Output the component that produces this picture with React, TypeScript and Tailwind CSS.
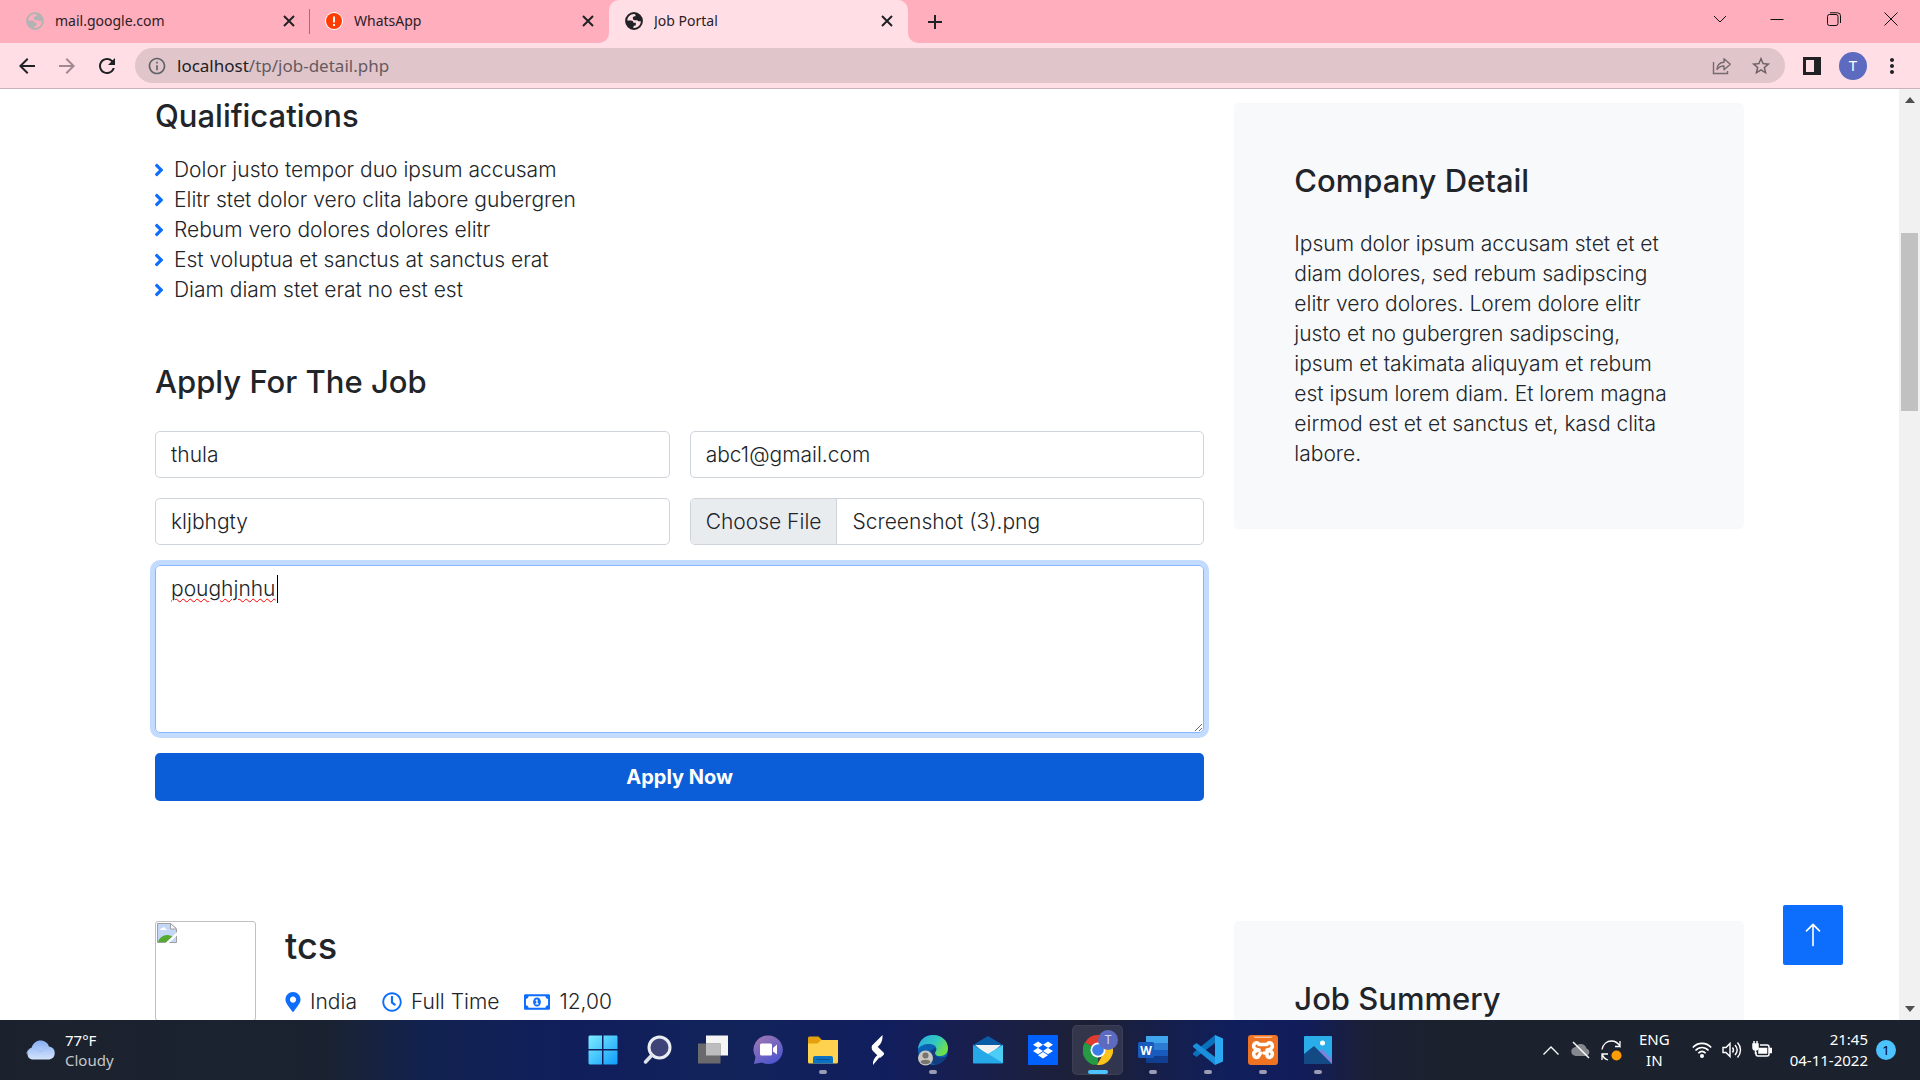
import type { ReactNode } from "react";
import {
  MdAdd,
  MdArrowBack,
  MdArrowForward,
  MdInfoOutline,
  MdMoreVert,
  MdRefresh,
  MdStarBorder,
} from "react-icons/md";
import { FaAngleRight, FaDropbox, FaMapMarkerAlt, FaRegClock, FaRegMoneyBillAlt } from "react-icons/fa";
import { BsArrowUp } from "react-icons/bs";

const qualifications = [
  "Dolor justo tempor duo ipsum accusam",
  "Elitr stet dolor vero clita labore gubergren",
  "Rebum vero dolores dolores elitr",
  "Est voluptua et sanctus at sanctus erat",
  "Diam diam stet erat no est est",
];

function Globe({ className }: { className: string }) {
  return (
    <svg viewBox="0 0 18 18" className={className} aria-hidden="true">
      <circle cx="9" cy="9" r="7.9" fill="none" stroke="currentColor" strokeWidth="2" />
      <path d="M1.5 8.6h4.3c1.7 0 2.6.9 2.6 2.2h2.4v2.6c-1.7 0-2.5.6-2.5 1.8v1.6C4.600 16.500 1.500 13.200 1.500 8.600z" fill="currentColor" />
      <path d="M9 1.200c4.700 0 8 3.400 8 7.900-1 .2-2.200.2-3 .2-.9 0-1.400-.4-1.400-1.100h-2.800c-1.100 0-2-.9-2-2 0-1.200.9-1.900 1.900-1.900h.8V3C10.500 2.300 9.700 1.800 9 1.200z" fill="currentColor" />
    </svg>
  );
}

function Tab({ title, icon, active = false }: { title: string; icon: ReactNode; active?: boolean }) {
  return (
    <div
      className={
        active
          ? "relative flex h-full w-[299px] shrink items-center rounded-t-[10px] bg-[#ffdfe5] pr-[15px] pb-[2px] pl-4"
          : "relative flex h-full w-[299px] shrink items-center pr-[15px] pb-[2px] pl-[15px]"
      }
    >
      {active && (
        <>
          <svg viewBox="0 0 10 10" className="absolute bottom-0 -left-[10px] size-[10px]" aria-hidden="true">
            <path d="M10 0v10H0A10 10 0 0 0 10 0z" fill="#ffdfe5" />
          </svg>
          <svg viewBox="0 0 10 10" className="absolute -right-[10px] bottom-0 size-[10px]" aria-hidden="true">
            <path d="M0 0v10h10A10 10 0 0 1 0 0z" fill="#ffdfe5" />
          </svg>
        </>
      )}
      <span className="flex size-[18px] shrink-0 items-center justify-center">{icon}</span>
      <span className="ml-[11px] flex-1 truncate text-[14px] leading-5 text-[#2a2125]">{title}</span>
      <button aria-label={"Close " + title} className="text-[#202124]">
        <svg viewBox="0 0 12 12" className="size-3" fill="none" stroke="currentColor" strokeWidth="2">
          <path d="M1 1l10 10M11 1L1 11" />
        </svg>
      </button>
    </div>
  );
}

function BrowserHeader() {
  return (
    <header className="shrink-0 font-['Noto_Sans',sans-serif]">
      <div className="flex h-[43px] bg-[#ffaebd] pl-[11px]">
        <Tab title="mail.google.com" icon={<Globe className="size-[18px] text-[#b3b3b3]" />} />
        <div className="my-[9px] -ml-px w-px bg-[#9d7078]" />
        <Tab
          title="WhatsApp"
          icon={
            <svg viewBox="0 0 18 18" className="size-[18px]" aria-hidden="true">
              <circle cx="9" cy="9" r="9" fill="#fff" />
              <circle cx="9" cy="9" r="8" fill="#ff3d00" />
              <path d="M8 4.500h2v6H8zM8 12h2v2H8z" fill="#fff" />
            </svg>
          }
        />
        <Tab active title="Job Portal" icon={<Globe className="size-[18px] text-[#202124]" />} />
        <button aria-label="New tab" className="ml-[15px] text-[#202124]">
          <MdAdd className="size-6" />
        </button>
        <div className="ml-auto flex h-[37px] pr-px text-[#111]">
          <button aria-label="Search tabs" className="flex w-[57px] items-center justify-center">
            <svg viewBox="0 0 14 8" className="h-2 w-[14px]" fill="none" stroke="currentColor">
              <path d="M1 1l6 6 6-6" />
            </svg>
          </button>
          <button aria-label="Minimize" className="flex w-[57px] items-center justify-center">
            <svg viewBox="0 0 14 14" className="size-[14px]" fill="none" stroke="currentColor">
              <path d="M0.500 7.500h13" />
            </svg>
          </button>
          <button aria-label="Restore" className="flex w-[57px] items-center justify-center">
            <svg viewBox="0 0 14 14" className="size-[14px]" fill="none" stroke="currentColor">
              <rect x="0.500" y="2.500" width="10.500" height="11" rx="2" />
              <path d="M3 .8h7.500a3 3 0 0 1 3 3V11" />
            </svg>
          </button>
          <button aria-label="Close window" className="flex w-[57px] items-center justify-center">
            <svg viewBox="0 0 14 14" className="size-[14px]" fill="none" stroke="currentColor">
              <path d="M.5.5l13 13M13.500.5l-13 13" />
            </svg>
          </button>
        </div>
      </div>
      <div className="flex h-[46px] items-center border-b border-[#c9b3b9] bg-[#ffdfe5] pr-4 pl-[15px]">
        <button aria-label="Back" className="mr-4 text-[#202124]">
          <MdArrowBack className="size-6" />
        </button>
        <button aria-label="Forward" className="mr-4 text-[#a2898f]">
          <MdArrowForward className="size-6" />
        </button>
        <button aria-label="Reload" className="mr-4 text-[#202124]">
          <MdRefresh className="size-6" />
        </button>
        <div className="flex h-[35px] flex-1 items-center rounded-full bg-[#e0c5ca] pr-[13px] pl-3">
          <MdInfoOutline className="size-5 text-[#5f6368]" />
          <a href="#address" className="ml-[10px] flex-1 text-[17px] leading-6 text-[#665a5e]">
            <span className="text-[#202124]">localhost</span>/tp/job-detail.php
          </a>
          <button aria-label="Share" className="mr-[18px] text-[#756a6d]">
            <svg viewBox="0 0 20 20" className="size-5" fill="none" stroke="currentColor" strokeWidth="1.400">
              <path d="M1.500 6v11.500h14V15" />
              <path d="M5 13.500c.3-4.500 2.800-7 7-7.200V2.700l6.300 5.500-6.300 5.500V10c-3-.1-5.200 1-7 3.500z" strokeLinejoin="round" />
            </svg>
          </button>
          <button aria-label="Bookmark" className="text-[#6b6164]">
            <MdStarBorder className="size-[22px]" />
          </button>
        </div>
        <button aria-label="Side panel" className="ml-[18px]">
          <svg viewBox="0 0 18 18" className="size-[18px]">
            <path d="M0 0h18v18H0zM3 3v12h8V3z" fill="#202124" fillRule="evenodd" />
          </svg>
        </button>
        <button
          aria-label="Profile T"
          className="ml-[18px] flex size-7 items-center justify-center rounded-full bg-[#5c6bc0] text-[15px] text-white"
        >
          T
        </button>
        <button aria-label="Menu" className="ml-[13px] text-[#202124]">
          <MdMoreVert className="size-6" />
        </button>
      </div>
    </header>
  );
}

const field =
  "h-[47px] w-full min-w-0 rounded-[5px] border border-[#ced4da] bg-white px-[15px] text-[21px] leading-[30px] font-light text-[#212529]";
const heading = "text-[31px] leading-9 font-medium";

function ApplyForm() {
  return (
    <form className="mt-[59px]" onSubmit={(e) => e.preventDefault()}>
      <h4 className={heading}>Apply For The Job</h4>
      <div className="mt-[31px] grid grid-cols-2 gap-5">
        <input aria-label="Your name" className={field} defaultValue="thula" />
        <input aria-label="Your email" className={field} defaultValue="abc1@gmail.com" />
        <input aria-label="Portfolio" className={field} defaultValue="kljbhgty" />
        <label className="flex h-[47px] overflow-hidden rounded-[5px] border border-[#ced4da] text-[21px] leading-[30px] font-light">
          <input type="file" aria-label="Resume" className="sr-only" />
          <span className="flex items-center border-r border-[#ced4da] bg-[#e9ecef] px-[15px]">Choose File</span>
          <span className="flex items-center px-[15px]">Screenshot (3).png</span>
        </label>
        <div className="relative col-span-2 flex">
          <textarea
            aria-label="Cover letter"
            spellCheck={false}
            className="h-[168px] w-full rounded-[5px] border border-[#86b7fe] px-[15px] py-[8px] text-[21px] leading-[30px] font-light text-[#212529] underline decoration-[#f00] decoration-wavy decoration-1 underline-offset-2 ring-[5px] ring-[#c2dbfe] outline-none"
            defaultValue="poughjnhu"
          />
          <div className="absolute top-[10px] left-[122px] h-7 w-px bg-black" />
        </div>
        <button className="col-span-2 h-12 rounded-[5px] bg-[#0b5ed7] text-[20px] leading-[30px] font-bold text-white">
          Apply Now
        </button>
      </div>
    </form>
  );
}

function JobPage() {
  return (
    <main className="relative min-w-0 flex-1 overflow-hidden bg-white px-6">
      <div className="mx-auto grid max-w-[1589px] grid-cols-[minmax(0,35fr)_minmax(0,17fr)] gap-x-[30px]">
        <section className="pt-[9px]">
          <h4 className={heading}>Qualifications</h4>
          <ul className="mt-[21px]">
            {qualifications.map((q) => (
              <li key={q} className="flex items-center text-[21px] leading-[30px] font-light">
                <FaAngleRight className="mr-[5px] -ml-[6px] size-5 shrink-0 text-[#0d6efd]" />
                {q}
              </li>
            ))}
          </ul>
          <ApplyForm />
        </section>
        <aside className="mt-[14px] self-start rounded-[5px] bg-[#f8f9fb] p-[60px]">
          <h4 className={heading}>Company Detail</h4>
          <p className="mt-[30px] text-[21px] leading-[30px] font-light">
            Ipsum dolor ipsum accusam stet et et diam dolores, sed rebum sadipscing elitr vero dolores. Lorem dolore
            elitr justo et no gubergren sadipscing, ipsum et takimata aliquyam et rebum est ipsum lorem diam. Et lorem
            magna eirmod est et et sanctus et, kasd clita labore.
          </p>
        </aside>
        <section className="mt-[120px] flex items-start">
          <div className="h-[100px] w-[101px] shrink-0 rounded-[3px] border border-[#c0c0c0] p-px">
            <svg viewBox="0 0 20 20" className="size-5" role="img" aria-label="Company logo">
              <path d="M.5.5h13l6 5.500v13.500H.5z" fill="#c5d7f6" stroke="#a0a0a0" />
              <path d="M1 19c1-4 5-7 9-7 3 0 5 1 6 2l-6 5z" fill="#56a932" />
              <path d="M3 7c0-1.500 1.500-2 2-1.800C5.500 4 8 4 8.300 5.500 9.500 5.500 10 7 9.500 7z" fill="#fff" />
              <path d="M13.500.5v5.500h6z" fill="#fff" stroke="#a0a0a0" />
              <path d="M20 9v3.500L12 20H8.500z" fill="#fff" />
            </svg>
          </div>
          <div className="ml-[29px]">
            <h3 className="mt-1 text-[36px] leading-[42px] font-medium">tcs</h3>
            <div className="mt-5 flex gap-[25px] text-[21px] leading-[30px] font-light">
              <span className="flex items-center gap-[9px]">
                <FaMapMarkerAlt className="-mx-[2px] size-5 text-[#0d6efd]" />
                India
              </span>
              <span className="flex items-center gap-[9px]">
                <FaRegClock className="size-5 text-[#0d6efd]" />
                Full Time
              </span>
              <span className="flex items-center gap-[9px]">
                <FaRegMoneyBillAlt className="size-[26px] text-[#0d6efd]" />
                12,00
              </span>
            </div>
          </div>
        </section>
        <aside className="mt-[120px] rounded-t-[5px] bg-[#f8f9fb] p-[60px]">
          <h4 className={heading}>Job Summery</h4>
        </aside>
      </div>
      <a
        href="#top"
        aria-label="Back to top"
        className="absolute right-[56px] bottom-[55px] flex size-[60px] items-center justify-center rounded-[2px] bg-[#0d6efd] text-white"
      >
        <BsArrowUp className="size-[26px]" />
      </a>
    </main>
  );
}

function ScrollBar() {
  return (
    <div className="flex w-[21px] shrink-0 flex-col items-center bg-[#f1f1f1] py-2 text-[#505050]">
      <svg viewBox="0 0 10 6" className="h-[6px] w-[10px]" fill="currentColor">
        <path d="M5 0l5 6H0z" />
      </svg>
      <div className="mt-[130px] h-[178px] w-[17px] bg-[#c1c1c1]" />
      <svg viewBox="0 0 10 6" className="mt-auto h-[6px] w-[10px]" fill="currentColor">
        <path d="M0 0h10L5 6z" />
      </svg>
    </div>
  );
}

function TaskButton({
  label,
  running = false,
  active = false,
  children,
}: {
  label: string;
  running?: boolean;
  active?: boolean;
  children: ReactNode;
}) {
  return (
    <button
      aria-label={label}
      className={
        active
          ? "relative mx-[2px] flex h-[50px] w-[51px] items-center justify-center rounded-[5px] border border-white/5 bg-white/10"
          : "relative mx-[2px] flex h-[50px] w-[51px] items-center justify-center"
      }
    >
      {children}
      {running && <span className="absolute bottom-px h-1 w-2 rounded-full bg-[#9a9cb4]" />}
      {active && <span className="absolute bottom-0 h-1 w-5 rounded-full bg-[#4cc2ff]" />}
    </button>
  );
}

function TaskIcons() {
  return (
    <nav aria-label="Taskbar" className="flex items-center">
      <TaskButton label="Start">
        <svg viewBox="0 0 30 30" className="size-[30px]">
          <defs>
            <linearGradient id="win" x1="0" y1="0" x2="1" y2="1" gradientUnits="objectBoundingBox">
              <stop offset="0" stopColor="#7deeff" />
              <stop offset="1" stopColor="#0f9bfb" />
            </linearGradient>
          </defs>
          <path d="M1.500.5h12.500v13.500H.5V1.500zM15.500.5h13.500l.5 1v12.500h-14zM.5 15.500h13.500v14H1.500l-1-1zM15.500 15.500h14v13l-1 1h-13z" fill="url(#win)" />
        </svg>
      </TaskButton>
      <TaskButton label="Search">
        <svg viewBox="0 0 30 30" className="size-[30px]" fill="none">
          <circle cx="16.500" cy="12.500" r="10.500" fill="#3f4478" stroke="#e9edf2" strokeWidth="3" />
          <path d="M9 20l-6.500 7" stroke="#dfe3ea" strokeWidth="3.500" strokeLinecap="round" />
        </svg>
      </TaskButton>
      <TaskButton label="Task view">
        <svg viewBox="0 0 30 30" className="size-[30px]">
          <path d="M8 .5h22v20H8z" fill="#f5f5f5" />
          <path d="M0 8.500h22.500v20H0z" fill="#6a6a6c" />
          <path d="M8 8.500h14.500v12H8z" fill="#bdbdc0" />
        </svg>
      </TaskButton>
      <TaskButton label="Chat">
        <svg viewBox="0 0 30 30" className="size-[30px]">
          <defs>
            <linearGradient id="chat" x1="0" y1="0" x2=".6" y2="1">
              <stop offset="0" stopColor="#a479b0" />
              <stop offset="1" stopColor="#4f57cf" />
            </linearGradient>
          </defs>
          <path d="M15 .5a14.300 14.300 0 1 1-6 27L1 29l1.500-7A14.300 14.300 0 0 1 15 .5z" fill="url(#chat)" />
          <rect x="7" y="8.500" width="12" height="12" rx="1.500" fill="#fff" />
          <path d="M20 13l4-3.500v10L20 16.500z" fill="#fff" />
        </svg>
      </TaskButton>
      <TaskButton label="File Explorer" running>
        <svg viewBox="0 0 30 30" className="size-[30px]">
          <path d="M0 3a1.500 1.500 0 0 1 1.500-1.500h9L14 5v5H0z" fill="#e5a00d" />
          <path d="M0 8.500h9.500L13 5h17v22a1.500 1.500 0 0 1-1.500 1.500h-27A1.500 1.500 0 0 1 0 27z" fill="#fed14e" />
          <path d="M5 28.500V23a2 2 0 0 1 2-2h16a2 2 0 0 1 2 2v5.500z" fill="#0a72c4" />
          <path d="M8.500 24.500h13" stroke="#0a4f91" />
        </svg>
      </TaskButton>
      <TaskButton label="S app">
        <svg viewBox="0 0 30 30" className="size-[30px]" fill="#fff">
          <path d="M19.500 0c.3 4-.6 7-2.500 9.500L12.500 14 9 10.500zM9 10.500l2.500-1.800L21 18c.3 1-.3 2-1 2.500l-3 2.500-6-6c-2-1.500-3-4-2-6.500zM14.500 20l2 2.200L10 30c-.5-4 1-7 4.500-10z" />
        </svg>
      </TaskButton>
      <TaskButton label="Edge" running>
        <svg viewBox="0 0 32 32" className="size-8">
          <defs>
            <linearGradient id="edge" x1="0" y1="0" x2="1" y2=".5">
              <stop offset="0" stopColor="#28a9e4" />
              <stop offset=".6" stopColor="#32c8c0" />
              <stop offset="1" stopColor="#6ee04c" />
            </linearGradient>
          </defs>
          <circle cx="16" cy="16" r="15" fill="#0b62b4" />
          <path d="M1 15C2 6 8 1 16 1c9 0 15 6 15 13 0 5-3 8-8 8-4 0-5-1.500-5-3 0-1 1.500-1.500 1.500-4S17 10 12 10C7 10 3 12 1 15z" fill="url(#edge)" />
          <path d="M18 19c0 4 5 5.500 11.500 3.800-2 4-6 7.200-11 8C13 29 11 24 12.500 19c1-3 3-4 6-5 1.500 2-.5 3.500-.5 5z" fill="#123d80" />
          <circle cx="8.500" cy="24" r="7.500" fill="#c8c6c3" />
          <circle cx="8.500" cy="21.500" r="3" fill="#77736f" />
          <path d="M3.500 28c.5-3 9.500-3 10 0-2 3-8 3-10 0z" fill="#77736f" />
        </svg>
      </TaskButton>
      <TaskButton label="Mail">
        <svg viewBox="0 0 30 30" className="size-[30px]">
          <path d="M0 10L15 1l15 9v4H0z" fill="#0a5ba5" />
          <path d="M2 10h26L15 21z" fill="#f1f1f1" />
          <path d="M0 10l15 9 15-9v17.500a1 1 0 0 1-1 1H1a1 1 0 0 1-1-1z" fill="#25a9e8" />
          <path d="M30 10v18L15 19z" fill="#4ccdf6" />
        </svg>
      </TaskButton>
      <TaskButton label="Dropbox">
        <span className="flex size-[30px] items-center justify-center bg-[#0061fe] text-white">
          <FaDropbox className="size-5" />
        </span>
      </TaskButton>
      <TaskButton label="Chrome" active>
        <svg viewBox="0 0 30 30" className="size-[30px]">
          <path d="M15 15L2 7.500A15 15 0 0 1 28 7.500z" fill="#e33b2e" />
          <path d="M15 15v15A15 15 0 0 1 2 7.500z" fill="#259b46" />
          <path d="M15 15L28 7.500A15 15 0 0 1 14 30l5-9z" fill="#fcc31b" />
          <path d="M2 7.500L9.500 20 15 22.500 11 30A15 15 0 0 1 2 7.500z" fill="#259b46" />
          <circle cx="15" cy="15" r="7.500" fill="#fff" />
          <circle cx="15" cy="15" r="5.800" fill="#3b7de9" />
        </svg>
        <span className="absolute top-1 right-1 flex size-5 items-center justify-center rounded-full bg-[#5c6bc0] text-[12px] leading-none text-[#d5d9f0]">
          T
        </span>
      </TaskButton>
      <TaskButton label="Word" running>
        <svg viewBox="0 0 30 30" className="size-[30px]">
          <path d="M8 1h22v7H8z" fill="#41a5ee" />
          <path d="M8 8h22v7H8z" fill="#2b7cd3" />
          <path d="M8 15h22v6.500H8z" fill="#185abd" />
          <path d="M8 21.500h22V28H8z" fill="#103f91" />
          <rect x="0" y="7" width="16" height="16" rx="1.500" fill="#185abd" />
          <text x="8" y="19.500" textAnchor="middle" fontSize="12" fontWeight="700" fill="#fff" fontFamily="Open Sans">
            W
          </text>
        </svg>
      </TaskButton>
      <TaskButton label="Visual Studio Code" running>
        <svg viewBox="0 0 30 30" className="size-[30px]">
          <path d="M22 0l8 3.500v23L22 30z" fill="#2aa8f2" />
          <path d="M22 0v8L3.500 22 0 19.500v-1.500z" fill="#0a72bd" />
          <path d="M22 30v-8L3.500 8 0 10.500V12z" fill="#1b8fdc" />
        </svg>
      </TaskButton>
      <TaskButton label="XAMPP" running>
        <svg viewBox="0 0 30 30" className="size-[30px]" fill="none">
          <rect width="30" height="30" rx="3" fill="#ee7423" />
          <path d="M5 1.500h20l-2 1.500H7z" fill="#f9c39c" />
          <path
            d="M11 15c-5-1-6-3-5-5.500S10 7 11 9.500h8c1-2.500 4-2.500 5 0s0 4.500-5 5.500c5 1 6 3 5 5.500s-4 2.500-5 0V18h-3M11 15c-5 1-6 3-5 5.500s4 2.500 5 0l1.500-2.500"
            stroke="#fff"
            strokeWidth="3.500"
            strokeLinejoin="round"
            strokeLinecap="round"
          />
        </svg>
      </TaskButton>
      <TaskButton label="Photos" running>
        <svg viewBox="0 0 30 30" className="size-[30px]">
          <rect x="1" y="1" width="28" height="28" rx="1" fill="#29aeea" />
          <path d="M14 18l5-4 10 10v5H14z" fill="#7b83dc" />
          <path d="M1 19l10-8 18 18H1z" fill="#134a86" />
          <circle cx="19.500" cy="8" r="2.500" fill="#fff" />
        </svg>
      </TaskButton>
    </nav>
  );
}

function SystemTray() {
  return (
    <div className="flex items-center justify-end pr-6 text-[15px] leading-[21px] text-white">
      <svg viewBox="0 0 16 9" className="mr-3 h-[9px] w-4" fill="none" stroke="#fff" strokeWidth="1.300">
        <path d="M.5 8.500L8 1l7.500 7.500" />
      </svg>
      <svg viewBox="0 0 20 18" className="mr-[10px] h-[18px] w-5">
        <path d="M5 15a4.500 4.500 0 0 1-.5-9 6 6 0 0 1 11 1.500A4 4 0 0 1 16 15z" fill="#85888f" />
        <path d="M2 1l16 16" stroke="#fff" strokeWidth="1.500" />
      </svg>
      <svg viewBox="0 0 21 21" className="mr-[17px] size-[21px]" fill="none" stroke="#fff" strokeWidth="1.300">
        <path d="M1 9.500C2 4 6 1 10.500 1c4 0 6.500 2 8.500 5V1M19 6.500h-5M7 20C4 19 2 17 1.500 14.500M1 20v-6h6" />
        <circle cx="15.500" cy="15.500" r="5" fill="#ff9c08" stroke="none" />
      </svg>
      <div className="mr-[22px] text-center">
        <p>ENG</p>
        <p>IN</p>
      </div>
      <svg viewBox="0 0 20 16" className="mr-[10px] h-4 w-5" fill="none" stroke="#fff" strokeWidth="1.600">
        <path d="M.8 5.500c5-5.500 13.400-5.500 18.400 0M3.500 8.500c3.700-4 9.300-4 13 0M6.300 11.300c2.200-2.200 5.200-2.200 7.400 0" />
        <circle cx="10" cy="14" r="2" fill="#fff" stroke="none" />
      </svg>
      <svg viewBox="0 0 20 18" className="mr-[10px] h-[18px] w-5" fill="none" stroke="#fff" strokeWidth="1.400">
        <path d="M1 6.500h3l4-4v13l-4-4H1zM10.500 6.500c1.200 1.500 1.200 3.500 0 5M13 4c2.600 3 2.600 7 0 10M15.500 1.500c4 4.500 4 10.500 0 15" />
      </svg>
      <svg viewBox="0 0 20 18" className="mr-[18px] h-[18px] w-5" fill="none" stroke="#fff" strokeWidth="1.500">
        <path d="M8 4h7a2 2 0 0 1 2 2v7a2 2 0 0 1-2 2H6a2 2 0 0 1-2-2v-2M18 7.500v4h1.500v-4z" />
        <path d="M7 11V7.500h7.500V12H7z" fill="#fff" />
        <path d="M1 3h5v3.500a2.500 2.500 0 0 1-5 0zM2 0v3M5 0v3M3.500 9v4" fill="#fff" />
      </svg>
      <div className="text-right">
        <p>21:45</p>
        <p>04-11-2022</p>
      </div>
      <span className="ml-2 flex size-5 items-center justify-center rounded-full bg-[#4cc2ff] text-[13px] leading-none text-black">
        1
      </span>
    </div>
  );
}

function TaskBar() {
  return (
    <footer className="grid h-[60px] shrink-0 grid-cols-[1fr_auto_1fr] bg-[linear-gradient(90deg,#1c222d_0%,#1a2231_17%,#12224f_22%,#101e5c_30%,#12235a_38%,#111e5e_46%,#191f4c_51%,#1d2034_57%,#171f48_60%,#101f5c_64%,#111d5a_68%,#1b1f38_71%,#1b222d_75%,#1c222d_100%)] font-['Noto_Sans',sans-serif]">
      <div className="flex items-center pl-[26px] text-[15px] leading-[20px] text-white">
        <svg viewBox="0 0 30 20" className="h-5 w-[30px]">
          <defs>
            <linearGradient id="cloud" x1="0" y1="0" x2="0" y2="1">
              <stop offset="0" stopColor="#86aef2" />
              <stop offset="1" stopColor="#d3e3fc" />
            </linearGradient>
          </defs>
          <path d="M6 19.500a6 6 0 0 1-.5-11.500C7 3 10.500.5 14.500.5c4 0 7.500 2.500 8.500 6a6.600 6.600 0 0 1 .5 13z" fill="url(#cloud)" />
          <path d="M1 14c0-4 4-7 8-5.500 3 1 4 3 6 3 2 0 3-4 8-4" fill="none" stroke="#9fc0f7" />
        </svg>
        <div className="ml-[9px]">
          <p>77°F</p>
          <p className="text-[#c5c7ca]">Cloudy</p>
        </div>
      </div>
      <TaskIcons />
      <SystemTray />
    </footer>
  );
}

export default function App() {
  return (
    <div className="flex h-screen flex-col overflow-hidden bg-white font-['Inter',sans-serif] text-[#212529]">
      <BrowserHeader />
      <div className="flex min-h-0 flex-1">
        <JobPage />
        <ScrollBar />
      </div>
      <TaskBar />
    </div>
  );
}
